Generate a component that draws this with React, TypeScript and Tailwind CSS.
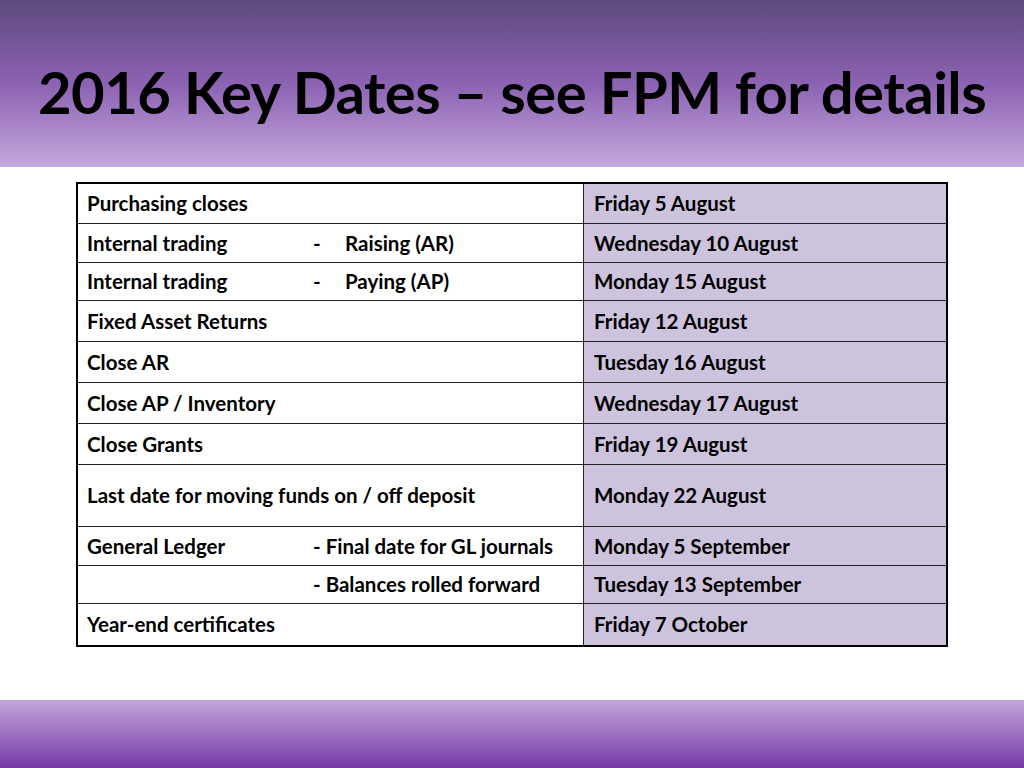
import React from "react";

const rows: { a: string; b?: string; c: string; h: number; dash?: boolean }[] = [
  { a: "Purchasing closes", c: "Friday 5 August", h: 39 },
  { a: "Internal trading", b: "Raising (AR)", dash: true, c: "Wednesday 10 August", h: 39 },
  { a: "Internal trading", b: "Paying (AP)", dash: true, c: "Monday 15 August", h: 38 },
  { a: "Fixed Asset Returns", c: "Friday 12 August", h: 41 },
  { a: "Close AR", c: "Tuesday 16 August", h: 41 },
  { a: "Close AP / Inventory", c: "Wednesday 17 August", h: 41 },
  { a: "Close Grants", c: "Friday 19 August", h: 41 },
  { a: "Last date for moving funds on / off deposit", c: "Monday 22 August", h: 62 },
  { a: "General Ledger", b: "- Final date for GL journals", c: "Monday 5 September", h: 39 },
  { a: "", b: "- Balances rolled forward", c: "Tuesday 13 September", h: 38 },
  { a: "Year-end certificates", c: "Friday 7 October", h: 42 },
];

export default function App() {
  return (
    <div
      className="w-[1024px] h-[768px] bg-white flex flex-col overflow-hidden"
      style={{ fontFamily: "Lato, 'Open Sans', sans-serif" }}
    >
      <div className="h-[167px] shrink-0 bg-gradient-to-b from-[#5d4a7e] via-[#8c62b2] to-[#c3a9dc] flex items-center pl-[38px] pt-[16px]">
        <h1 className="text-[58px] font-bold text-black tracking-[-0.55px] leading-none whitespace-nowrap">
          2016 Key Dates – see FPM for details
        </h1>
      </div>
      <div className="flex-1 pt-[15px] pl-[76px]">
        <div className="w-[872px] border-[2.5px] border-black">
          {rows.map((r, i) => (
            <div
              key={i}
              className={`flex ${i > 0 ? "border-t-[1.5px] border-[#222]" : ""}`}
              style={{ height: r.h }}
            >
              <div className="w-[506px] shrink-0 bg-white border-r-[1.5px] border-[#222] flex items-center pl-[9px] text-[20.5px] font-bold text-black whitespace-nowrap">
                {r.b !== undefined ? (
                  <>
                    <span className="w-[226px] shrink-0">{r.a}</span>
                    <span className="flex">
                      {r.dash && <span className="w-[32px]">-</span>}
                      <span>{r.b}</span>
                    </span>
                  </>
                ) : (
                  <span>{r.a}</span>
                )}
              </div>
              <div className="flex-1 bg-[#cdc3dc] flex items-center pl-[10px] text-[20.5px] font-bold text-black whitespace-nowrap">
                {r.c}
              </div>
            </div>
          ))}
        </div>
      </div>
      <div className="h-[68px] shrink-0 bg-gradient-to-b from-[#c1a7d9] via-[#9d70c2] to-[#7638a5]" />
    </div>
  );
}
